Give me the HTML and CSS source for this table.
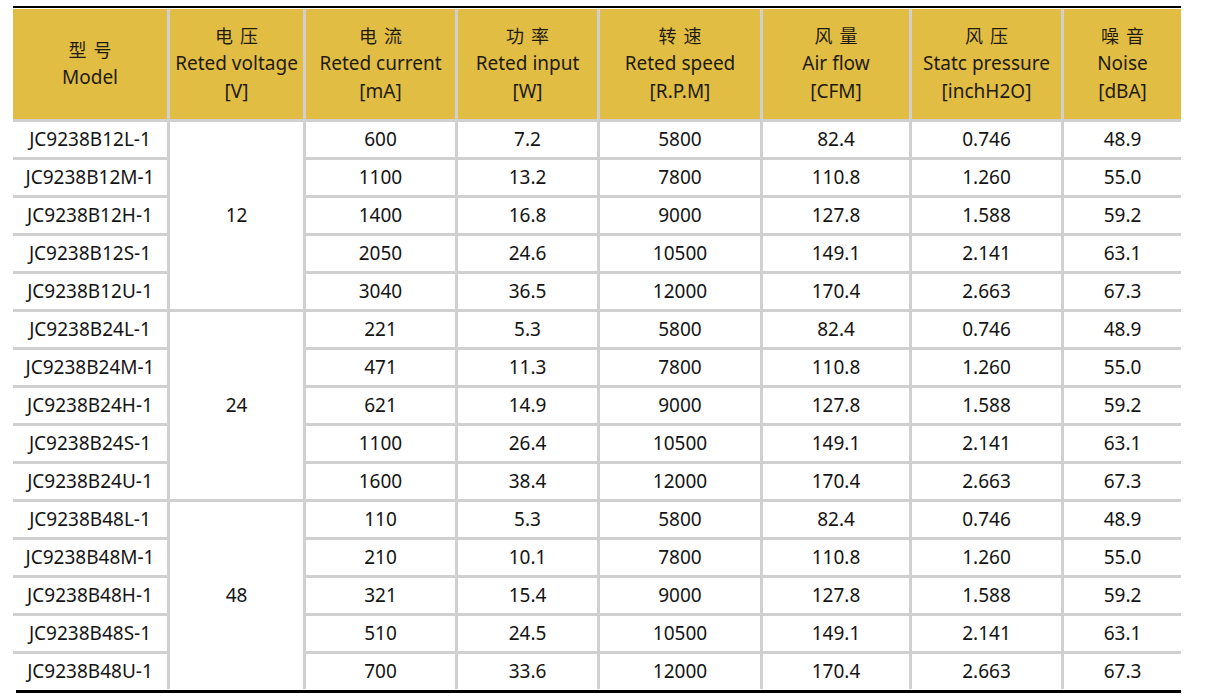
FILE: index.html
```html
<!DOCTYPE html>
<html lang="zh">
<head>
<meta charset="utf-8">
<title>JC9238B</title>
<link rel="stylesheet" href="styles.css">
</head>
<body>
<div class="sheet">
  <div class="rule-top"></div>
  <div class="grid">
    <div class="hd"><span class="zh">型&nbsp;号</span><span>Model</span></div>
    <div class="hd"><span class="zh">电&nbsp;压</span><span>Reted voltage</span><span>[V]</span></div>
    <div class="hd"><span class="zh">电&nbsp;流</span><span>Reted current</span><span>[mA]</span></div>
    <div class="hd"><span class="zh">功&nbsp;率</span><span>Reted input</span><span>[W]</span></div>
    <div class="hd"><span class="zh">转&nbsp;速</span><span>Reted speed</span><span>[R.P.M]</span></div>
    <div class="hd"><span class="zh">风&nbsp;量</span><span>Air flow</span><span>[CFM]</span></div>
    <div class="hd"><span class="zh">风&nbsp;压</span><span>Statc pressure</span><span>[inchH2O]</span></div>
    <div class="hd"><span class="zh">噪&nbsp;音</span><span>Noise</span><span>[dBA]</span></div>

    <div class="c">JC9238B12L-1</div><div class="c v">12</div><div class="c">600</div><div class="c">7.2</div><div class="c">5800</div><div class="c">82.4</div><div class="c">0.746</div><div class="c">48.9</div>
    <div class="c">JC9238B12M-1</div><div class="c">1100</div><div class="c">13.2</div><div class="c">7800</div><div class="c">110.8</div><div class="c">1.260</div><div class="c">55.0</div>
    <div class="c">JC9238B12H-1</div><div class="c">1400</div><div class="c">16.8</div><div class="c">9000</div><div class="c">127.8</div><div class="c">1.588</div><div class="c">59.2</div>
    <div class="c">JC9238B12S-1</div><div class="c">2050</div><div class="c">24.6</div><div class="c">10500</div><div class="c">149.1</div><div class="c">2.141</div><div class="c">63.1</div>
    <div class="c">JC9238B12U-1</div><div class="c">3040</div><div class="c">36.5</div><div class="c">12000</div><div class="c">170.4</div><div class="c">2.663</div><div class="c">67.3</div>

    <div class="c">JC9238B24L-1</div><div class="c v">24</div><div class="c">221</div><div class="c">5.3</div><div class="c">5800</div><div class="c">82.4</div><div class="c">0.746</div><div class="c">48.9</div>
    <div class="c">JC9238B24M-1</div><div class="c">471</div><div class="c">11.3</div><div class="c">7800</div><div class="c">110.8</div><div class="c">1.260</div><div class="c">55.0</div>
    <div class="c">JC9238B24H-1</div><div class="c">621</div><div class="c">14.9</div><div class="c">9000</div><div class="c">127.8</div><div class="c">1.588</div><div class="c">59.2</div>
    <div class="c">JC9238B24S-1</div><div class="c">1100</div><div class="c">26.4</div><div class="c">10500</div><div class="c">149.1</div><div class="c">2.141</div><div class="c">63.1</div>
    <div class="c">JC9238B24U-1</div><div class="c">1600</div><div class="c">38.4</div><div class="c">12000</div><div class="c">170.4</div><div class="c">2.663</div><div class="c">67.3</div>

    <div class="c">JC9238B48L-1</div><div class="c v">48</div><div class="c">110</div><div class="c">5.3</div><div class="c">5800</div><div class="c">82.4</div><div class="c">0.746</div><div class="c">48.9</div>
    <div class="c">JC9238B48M-1</div><div class="c">210</div><div class="c">10.1</div><div class="c">7800</div><div class="c">110.8</div><div class="c">1.260</div><div class="c">55.0</div>
    <div class="c">JC9238B48H-1</div><div class="c">321</div><div class="c">15.4</div><div class="c">9000</div><div class="c">127.8</div><div class="c">1.588</div><div class="c">59.2</div>
    <div class="c">JC9238B48S-1</div><div class="c">510</div><div class="c">24.5</div><div class="c">10500</div><div class="c">149.1</div><div class="c">2.141</div><div class="c">63.1</div>
    <div class="c">JC9238B48U-1</div><div class="c">700</div><div class="c">33.6</div><div class="c">12000</div><div class="c">170.4</div><div class="c">2.663</div><div class="c">67.3</div>
  </div>
  <div class="rule-bottom"></div>
</div>
</body>
</html>
```

FILE: styles.css
```css
* { box-sizing: border-box; }
html, body { margin: 0; padding: 0; background: #ffffff; }
body {
  font-family: "Noto Sans", "Noto Sans CJK SC", sans-serif;
  color: #161616;
}
.sheet {
  width: 1168px;
  margin: 6px 0 0 13px;
}
.rule-top {
  height: 2px;
  background: #000;
  margin-bottom: 1px;
}
.grid {
  display: grid;
  grid-template-columns: 154px 133px 149px 139px 160px 146px 149px 117px;
  grid-template-rows: 110px repeat(15, 35px);
  gap: 3px;
  background: #d0d0d0;
}
.hd {
  background: #e1be43;
  display: flex;
  flex-direction: column;
  align-items: center;
  justify-content: center;
  padding-bottom: 2px;
  font-size: 19px;
  line-height: 28px;
  color: #1e1a10;
  white-space: nowrap;
}
.hd .zh {
  font-family: "Noto Sans CJK SC", sans-serif;
  font-size: 18px;
  line-height: 28px;
  word-spacing: 3px;
}
.c {
  background: #fff;
  display: flex;
  align-items: center;
  justify-content: center;
  padding-bottom: 2px;
  font-size: 19px;
  white-space: nowrap;
  color: #141414;
}
.v {
  grid-column: 2;
  grid-row: span 5;
}
.rule-bottom {
  height: 3px;
  background: #000;
  margin: 1px 0 0 3px;
}
```
